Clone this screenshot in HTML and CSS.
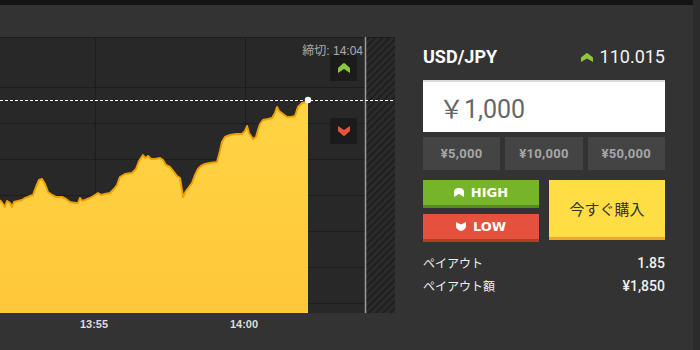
FILE: index.html
```html
<!DOCTYPE html>
<html lang="ja">
<head>
<meta charset="utf-8">
<title>USD/JPY</title>
<link rel="stylesheet" href="styles.css">
</head>
<body>
<div class="page">
  <div class="main">
    <div class="topbar"></div>
    <div class="content">
      <section class="chart-col">
        <div class="chart">
          <svg class="chart-svg" width="395" height="276" viewBox="0 0 395 276">
            <defs>
              <pattern id="hatch" width="5" height="5" patternUnits="userSpaceOnUse" patternTransform="rotate(45)">
                <rect width="5" height="5" fill="#2b2b2b"/>
                <rect width="2" height="5" fill="#1f1f1f"/>
              </pattern>
              <linearGradient id="fillg" x1="0" y1="0" x2="0" y2="1">
                <stop offset="0" stop-color="#ffd444"/>
                <stop offset="1" stop-color="#ffc73a"/>
              </linearGradient>
            </defs>
            <rect x="0" y="0" width="395" height="276" fill="#282828"/>
            <rect x="366" y="0" width="29" height="276" fill="url(#hatch)"/>
            <g stroke="#1d1d1d" stroke-width="1">
              <line x1="0" y1="0.5" x2="395" y2="0.5"/>
              <line x1="0" y1="50.5" x2="365" y2="50.5"/>
              <line x1="0" y1="86.5" x2="365" y2="86.5"/>
              <line x1="0" y1="122.5" x2="365" y2="122.5"/>
              <line x1="0" y1="158.5" x2="365" y2="158.5"/>
              <line x1="0" y1="194.5" x2="365" y2="194.5"/>
              <line x1="0" y1="230.5" x2="365" y2="230.5"/>
              <line x1="0" y1="266.5" x2="365" y2="266.5"/>
              <line x1="95.5" y1="0" x2="95.5" y2="276"/>
              <line x1="245.5" y1="0" x2="245.5" y2="276"/>
            </g>
            <path fill="url(#fillg)" d="M0,276 L0,163 L3,167 L5,170 L7,164 L10,166 L12,170 L14,165 L18,164 L22,163 L25,161 L28,160 L30,159 L33,158 L36,150 L39,143 L42,142 L45,147 L48,155 L52,158 L56,160 L62,160 L66,162 L70,165 L75,166 L78,166 L80,161 L82,164 L85,163 L90,161 L95,158 L98,156 L101,158 L105,157 L110,156 L114,152 L117,148 L120,140 L125,137 L132,136 L136,132 L139,124 L143,118 L145,121 L148,119 L151,122 L155,122 L160,121 L163,123 L166,128 L170,130 L174,135 L177,139 L180,141 L183,160 L186,154 L189,150 L192,146 L195,138 L198,132 L201,129 L205,127 L210,126 L217,125 L220,114 L222,105 L225,100 L230,98 L236,97 L242,97 L245,94 L247,89 L249,96 L253,102 L256,100 L258,93 L260,87 L263,83 L268,82 L272,81 L275,76 L277,70 L279,74 L283,77 L287,80 L291,80 L295,79 L298,70 L302,66 L306,65 L308,63 L308,276 Z"/>
            <path fill="none" stroke="#f0a000" stroke-width="2" stroke-linejoin="round" d="M0,163 L3,167 L5,170 L7,164 L10,166 L12,170 L14,165 L18,164 L22,163 L25,161 L28,160 L30,159 L33,158 L36,150 L39,143 L42,142 L45,147 L48,155 L52,158 L56,160 L62,160 L66,162 L70,165 L75,166 L78,166 L80,161 L82,164 L85,163 L90,161 L95,158 L98,156 L101,158 L105,157 L110,156 L114,152 L117,148 L120,140 L125,137 L132,136 L136,132 L139,124 L143,118 L145,121 L148,119 L151,122 L155,122 L160,121 L163,123 L166,128 L170,130 L174,135 L177,139 L180,141 L183,160 L186,154 L189,150 L192,146 L195,138 L198,132 L201,129 L205,127 L210,126 L217,125 L220,114 L222,105 L225,100 L230,98 L236,97 L242,97 L245,94 L247,89 L249,96 L253,102 L256,100 L258,93 L260,87 L263,83 L268,82 L272,81 L275,76 L277,70 L279,74 L283,77 L287,80 L291,80 L295,79 L298,70 L302,66 L306,65 L308,63"/>
            <line x1="365.5" y1="0" x2="365.5" y2="276" stroke="#9a9a9a" stroke-width="1.5"/>
            <line x1="0" y1="63.5" x2="395" y2="63.5" stroke="#ffffff" stroke-width="1" stroke-dasharray="3 2"/>
            <circle cx="308" cy="63" r="3.2" fill="#ffffff"/>
          </svg>
          <div class="deadline">締切: 14:04</div>
          <div class="dir-btn dir-up">
            <svg width="12" height="10" viewBox="0 0 12 10"><path d="M0,5 L5,0.5 Q6,-0.3 7,0.5 L12,5 L12,10 L6,6 L0,10 Z" fill="#8cc63f"/></svg>
          </div>
          <div class="dir-btn dir-down">
            <svg width="12" height="10" viewBox="0 0 12 10"><path d="M0,0 L6,4 L12,0 L12,5 L7,9.5 Q6,10.3 5,9.5 L0,5 Z" fill="#e8533b"/></svg>
          </div>
        </div>
        <div class="axis">
          <span class="tick tick-1">13:55</span>
          <span class="tick tick-2">14:00</span>
        </div>
      </section>

      <section class="panel">
        <div class="pair-row">
          <span class="pair">USD/JPY</span>
          <span class="rate">
            <svg class="rate-icon" width="12" height="9" viewBox="0 0 12 9"><path d="M0,4.5 L5,0.5 Q6,-0.3 7,0.5 L12,4.5 L12,9 L6,5.5 L0,9 Z" fill="#8cc63f"/></svg>
            110.015
          </span>
        </div>
        <div class="amount">￥1,000</div>
        <div class="presets">
          <div class="preset">¥5,000</div>
          <div class="preset">¥10,000</div>
          <div class="preset">¥50,000</div>
        </div>
        <div class="actions">
          <div class="hl">
            <div class="btn btn-high">
              <svg width="10" height="9" viewBox="0 0 10 9"><path d="M0,9 L0,4 Q0,0 5,0 Q10,0 10,4 L10,9 L5,6 Z" fill="#ffffff"/></svg>
              HIGH
            </div>
            <div class="btn btn-low">
              <svg width="10" height="9" viewBox="0 0 10 9"><path d="M0,0 L5,2.5 L10,0 L10,4 Q10,7.5 5,9 Q0,7.5 0,4 Z" fill="#ffffff"/></svg>
              LOW
            </div>
          </div>
          <div class="buy">今すぐ購入</div>
        </div>
        <div class="payout">
          <div class="prow"><span>ペイアウト</span><span class="val">1.85</span></div>
          <div class="prow"><span>ペイアウト額</span><span class="val">¥1,850</span></div>
        </div>
      </section>
    </div>
  </div>
  <div class="strip"></div>
</div>
</body>
</html>
```

FILE: styles.css
```css
html, body {
  margin: 0;
  padding: 0;
}
body {
  background: #333333;
  width: 700px;
  height: 350px;
  overflow: hidden;
  font-family: Roboto, "Noto Sans CJK JP", sans-serif;
  color: #eeeeee;
}
.page {
  display: flex;
  width: 700px;
  height: 350px;
}
.main {
  width: 693px;
  display: flex;
  flex-direction: column;
}
.strip {
  width: 7px;
  background: #2b2b2b;
}
.topbar {
  height: 5px;
  background: #141414;
}
.content {
  display: flex;
}
.chart-col {
  width: 395px;
  padding-top: 32px;
}
.chart {
  position: relative;
  width: 395px;
  height: 276px;
}
.chart-svg {
  display: block;
}
.deadline {
  position: absolute;
  right: 32px;
  top: 4px;
  font-family: "Liberation Sans", "Noto Sans CJK JP", sans-serif;
  font-size: 12px;
  color: #ababab;
}
.dir-btn {
  position: absolute;
  left: 330px;
  width: 27px;
  height: 26px;
  background: #1b1b1b;
  display: flex;
  align-items: center;
  justify-content: center;
}
.dir-btn svg {
  display: block;
}
.dir-up {
  top: 18px;
}
.dir-down {
  top: 81px;
}
.axis {
  position: relative;
  height: 30px;
}
.tick {
  position: absolute;
  top: 5px;
  transform: translateX(-50%);
  font-family: "Liberation Sans", Arial, sans-serif;
  font-weight: bold;
  font-size: 11px;
  color: #dddddd;
}
.tick-1 {
  left: 94px;
}
.tick-2 {
  left: 244px;
}

.panel {
  width: 242px;
  margin-left: 28px;
  padding-top: 38px;
}
.pair-row {
  display: flex;
  justify-content: space-between;
  align-items: center;
  height: 26px;
  margin-bottom: 11px;
}
.pair {
  font-weight: bold;
  font-size: 18px;
  color: #ffffff;
}
.rate {
  display: flex;
  align-items: center;
  font-size: 18px;
  color: #f2f2f2;
}
.rate-icon {
  margin-right: 7px;
  margin-top: 3px;
}
.amount {
  height: 50px;
  background: #ffffff;
  border-top: 2px solid #dcdcdc;
  box-sizing: content-box;
  display: flex;
  align-items: center;
  padding-left: 16px;
  font-size: 25px;
  color: #666666;
}
.presets {
  display: grid;
  grid-template-columns: 1fr 1fr 1fr;
  gap: 5px;
  margin-top: 5px;
}
.preset {
  height: 33px;
  background: #444444;
  display: flex;
  align-items: center;
  justify-content: center;
  font-weight: bold;
  font-size: 13px;
  letter-spacing: 0.3px;
  color: #a6a6a6;
}
.actions {
  display: grid;
  grid-template-columns: 116px 116px;
  column-gap: 10px;
  margin-top: 10px;
}
.hl {
  display: flex;
  flex-direction: column;
  gap: 6px;
}
.btn {
  height: 25px;
  display: flex;
  align-items: center;
  justify-content: center;
  gap: 7px;
  font-family: "DejaVu Sans", sans-serif;
  font-weight: bold;
  font-size: 13px;
  color: #ffffff;
}
.btn svg {
  display: block;
}
.btn-high {
  background: #76b52a;
  border-bottom: 3px solid #578a1c;
}
.btn-low {
  background: #e5513c;
  border-bottom: 3px solid #b63a28;
}
.buy {
  height: 57px;
  background: #ffde45;
  border-bottom: 3px solid #f4a62a;
  display: flex;
  align-items: center;
  justify-content: center;
  font-family: "Noto Sans CJK JP", sans-serif;
  font-size: 15px;
  color: #333333;
}
.payout {
  margin-top: 9px;
}
.prow {
  display: flex;
  justify-content: space-between;
  align-items: center;
  height: 23px;
  font-family: "Noto Sans CJK JP", sans-serif;
  font-size: 12px;
  color: #eeeeee;
}
.val {
  font-family: Roboto, sans-serif;
  font-weight: 500;
  font-size: 14px;
}
```
